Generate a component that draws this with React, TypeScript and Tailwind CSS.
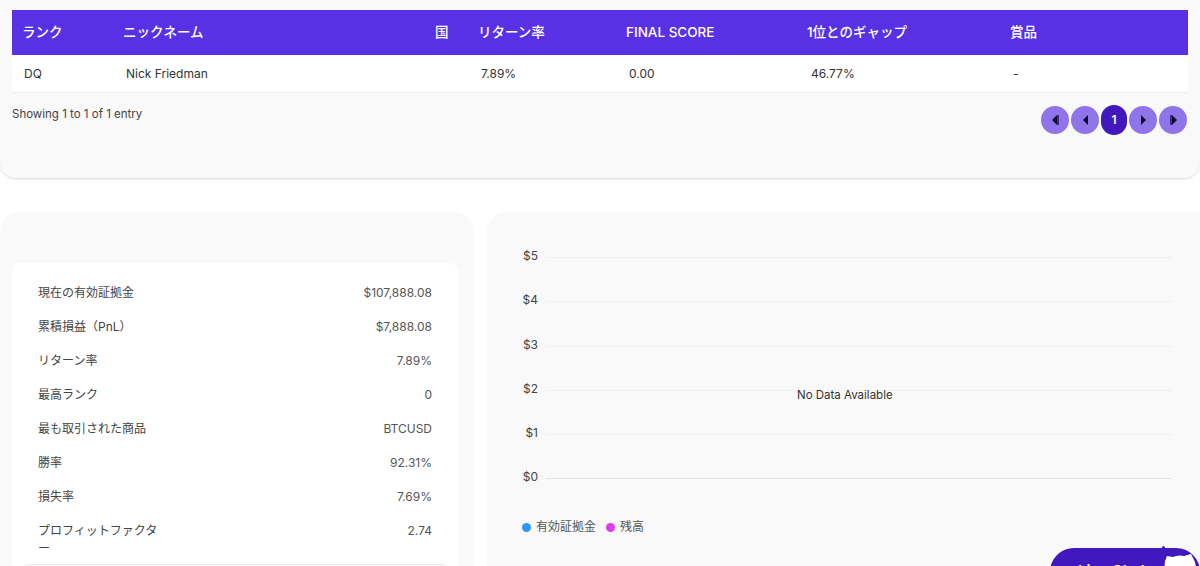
import { ReactNode } from 'react';

const font = { fontFamily: '"Inter", "Noto Sans CJK JP", sans-serif' };

const stats = [
  ['現在の有効証拠金', '$107,888.08'],
  ['累積損益（PnL）', '$7,888.08'],
  ['リターン率', '7.89%'],
  ['最高ランク', '0'],
  ['最も取引された商品', 'BTCUSD'],
  ['勝率', '92.31%'],
  ['損失率', '7.69%'],
  ['プロフィットファクター', '2.74'],
];

const ticks = ['$5', '$4', '$3', '$2', '$1', '$0'];

function PageButton({ children }: { children: ReactNode }) {
  return (
    <button className="w-7 h-7 rounded-full bg-[#8f74ea] flex items-center justify-center">
      {children}
    </button>
  );
}

function Tri({ dir }: { dir: 'left' | 'right' }) {
  return (
    <svg width="5" height="10" viewBox="0 0 5 10">
      <path d={dir === 'left' ? 'M5 0V10L0 5Z' : 'M0 0V10L5 5Z'} fill="#0a0a2a" />
    </svg>
  );
}

export default function App() {
  return (
    <div className="relative h-[566px] w-[1200px] overflow-hidden bg-white text-[#333]" style={font}>
      {/* Leaderboard */}
      <section className="h-[178px] bg-[#f9f9f9] rounded-b-2xl shadow-[0_1px_2px_rgba(0,0,0,0.15)] px-3 pt-[10px]">
        <table className="w-full table-fixed border-collapse">
          <thead>
            <tr className="h-[45px] bg-[#5831e4] text-white text-[13.5px] font-medium text-left">
              <th className="w-[101px] pl-[10px] font-medium">ランク</th>
              <th className="w-[312px] pl-[10px] font-medium">ニックネーム</th>
              <th className="w-[43px] pl-[10px] font-medium">国</th>
              <th className="w-[148px] pl-[10px] font-medium">リターン率</th>
              <th className="w-[181px] pl-[10px] font-medium">FINAL SCORE</th>
              <th className="w-[203px] pl-[10px] font-medium">1位とのギャップ</th>
              <th className="pl-[10px] font-medium">賞品</th>
            </tr>
          </thead>
          <tbody>
            <tr className="h-[37px] bg-white text-xs border-b border-[#f0f0f0]">
              <td className="pl-3 pt-px">DQ</td>
              <td className="pl-[13px] pt-px">Nick Friedman</td>
              <td></td>
              <td className="pl-[13px] pt-px">7.89%</td>
              <td className="pl-[13px] pt-px">0.00</td>
              <td className="pl-[14px] pt-px">46.77%</td>
              <td className="pl-[13px] pt-px">-</td>
            </tr>
          </tbody>
        </table>
        <div className="flex justify-between items-start mt-[13px]">
          <span className="text-[11.5px] text-[#444]">Showing 1 to 1 of 1 entry</span>
          <div className="flex items-center gap-[2px] -mt-[1px] mr-px">
            <PageButton>
              <span className="flex items-center">
                <Tri dir="left" />
                <span className="w-[2px] h-[10px] bg-[#3d2a8a]" />
              </span>
            </PageButton>
            <PageButton>
              <Tri dir="left" />
            </PageButton>
            <button className="w-[26px] h-[30px] rounded-full bg-[#4118be] text-white text-xs font-semibold">1</button>
            <PageButton>
              <Tri dir="right" />
            </PageButton>
            <PageButton>
              <span className="flex items-center">
                <span className="w-[2px] h-[10px] bg-[#3d2a8a]" />
                <Tri dir="right" />
              </span>
            </PageButton>
          </div>
        </div>
      </section>

      <div className="flex gap-[13px] mt-[34px]">
        {/* Stats */}
        <section className="w-[474px] h-[400px] shrink-0 bg-[#f9f9f9] rounded-[20px] pl-3 pr-4 pt-[51px]">
          <div className="h-[340px] bg-white rounded-lg px-[13px] pt-[13px]">
            {stats.map(([label, value], i) => (
              <div
                key={label}
                className={`flex justify-between px-[13px] py-2 text-xs leading-[18px] ${i === 7 ? 'border-b border-[#e6e9f0] pb-[6px]' : ''}`}
              >
                <span className="w-[122px] shrink-0 text-[#444] whitespace-pre-wrap break-all">{label}</span>
                <span className="text-[#555]">{value}</span>
              </div>
            ))}
          </div>
        </section>

        {/* Chart */}
        <section className="relative flex-1 h-[400px] mr-[-20px] bg-[#f9f9f9] rounded-[20px] pl-[27px] pr-[48px] pt-[26px]">
          <div className="flex flex-col">
            {ticks.map((tick, i) => (
              <div key={tick} className="flex items-end h-[44.3px] first:h-[20px]">
                <span className="w-[24px] text-right text-xs leading-[18px] mb-[-7px] text-[#444]">{tick}</span>
                <div className={`flex-1 ml-[8px] h-px ${i === 5 ? 'bg-[#e3e3e3]' : 'bg-[#f0f0f0]'}`} />
              </div>
            ))}
          </div>
          <span className="absolute left-[310px] top-[175px] text-[11.5px]">No Data Available</span>
          <div className="flex items-center text-xs mt-[40px]">
            <span className="w-[9px] h-[9px] rounded-full bg-[#2e96f5] mr-[5px] ml-[8px]" />
            <span className="text-[#555]">有効証拠金</span>
            <span className="w-[9px] h-[9px] rounded-full bg-[#e23cf0] ml-[10px] mr-[5px]" />
            <span className="text-[#555]">残高</span>
          </div>
        </section>
      </div>

      {/* Chat launcher */}
      <div className="absolute left-[1050px] top-[548px] w-[150px] h-[50px] rounded-[24px] bg-[#4118be] text-white text-[15px] font-semibold pl-[28px] pt-[12px]">
        Live Chat
        <svg className="absolute left-[114px] top-[5px]" width="34" height="20" viewBox="0 0 34 20">
          <path d="M1 8L3 3L9 4A16 16 0 0 1 20 3L27 1L31 9L33 20H0Z" fill="#fff" />
        </svg>
        <span className="absolute left-[112px] -top-[2px] w-[3px] h-[3px] rounded-full bg-[#4118be]" />
      </div>
    </div>
  );
}
